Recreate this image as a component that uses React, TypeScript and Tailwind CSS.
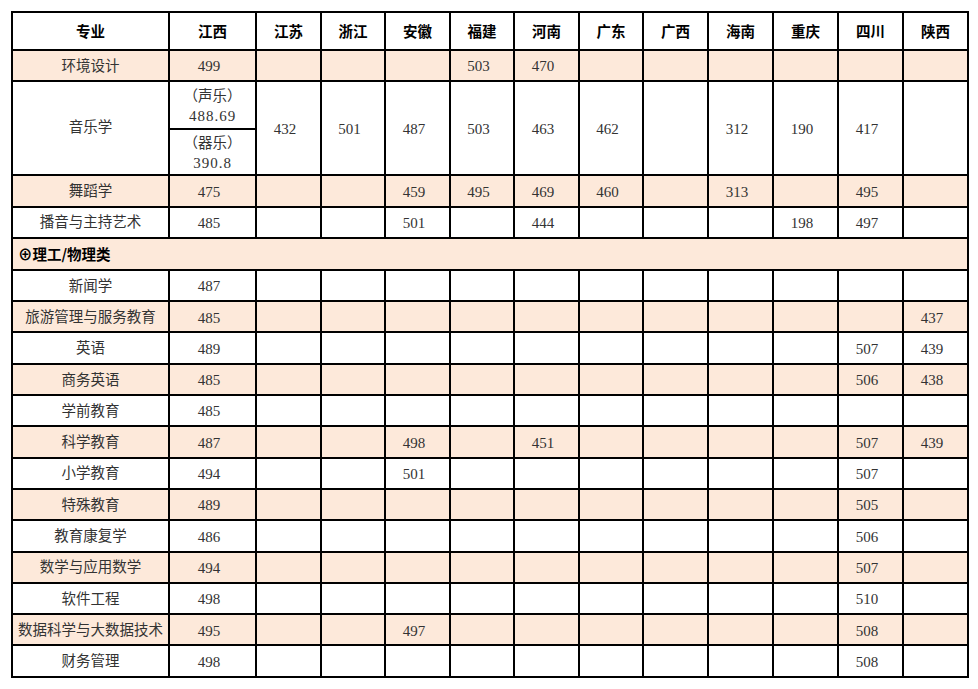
const PROVINCES = ["江西", "江苏", "浙江", "安徽", "福建", "河南", "广东", "广西", "海南", "重庆", "四川", "陕西"];

type Row = { name: string; scores: string[]; shaded: boolean };

const ART_ROWS: Row[] = [
  { name: "舞蹈学", scores: ["475", "", "", "459", "495", "469", "460", "", "313", "", "495", ""], shaded: true },
  { name: "播音与主持艺术", scores: ["485", "", "", "501", "", "444", "", "", "", "198", "497", ""], shaded: false },
];

const SCIENCE_ROWS: Row[] = [
  { name: "新闻学", scores: ["487", "", "", "", "", "", "", "", "", "", "", ""], shaded: false },
  { name: "旅游管理与服务教育", scores: ["485", "", "", "", "", "", "", "", "", "", "", "437"], shaded: true },
  { name: "英语", scores: ["489", "", "", "", "", "", "", "", "", "", "507", "439"], shaded: false },
  { name: "商务英语", scores: ["485", "", "", "", "", "", "", "", "", "", "506", "438"], shaded: true },
  { name: "学前教育", scores: ["485", "", "", "", "", "", "", "", "", "", "", ""], shaded: false },
  { name: "科学教育", scores: ["487", "", "", "498", "", "451", "", "", "", "", "507", "439"], shaded: true },
  { name: "小学教育", scores: ["494", "", "", "501", "", "", "", "", "", "", "507", ""], shaded: false },
  { name: "特殊教育", scores: ["489", "", "", "", "", "", "", "", "", "", "505", ""], shaded: true },
  { name: "教育康复学", scores: ["486", "", "", "", "", "", "", "", "", "", "506", ""], shaded: false },
  { name: "数学与应用数学", scores: ["494", "", "", "", "", "", "", "", "", "", "507", ""], shaded: true },
  { name: "软件工程", scores: ["498", "", "", "", "", "", "", "", "", "", "510", ""], shaded: false },
  { name: "数据科学与大数据技术", scores: ["495", "", "", "497", "", "", "", "", "", "", "508", ""], shaded: true },
  { name: "财务管理", scores: ["498", "", "", "", "", "", "", "", "", "", "508", ""], shaded: false },
];

const cell = "border-2 border-black text-center p-0";
const num = "text-[15px] pr-[7px] pt-[2px]";
const body = "font-['Liberation_Serif','Noto_Sans_CJK_SC',serif] text-[#333]";

function DataRow({ row }: { row: Row }) {
  return (
    <tr className={`h-[31.3px] ${row.shaded ? "bg-[#fde9da]" : "bg-white"}`}>
      <td className={`${cell} text-[14.5px] pt-[2px] whitespace-nowrap`}>{row.name}</td>
      {row.scores.map((s, i) => (
        <td key={i} className={`${cell} ${num}`}>
          {s}
        </td>
      ))}
    </tr>
  );
}

export default function App() {
  return (
    <div className="bg-white w-[978px] h-[689px] pt-[11px] pl-[11px]">
      <table className={`table-fixed border-collapse w-[956px] ${body}`}>
        <colgroup>
          <col className="w-[157px]" />
          <col className="w-[87px]" />
          <col className="w-[65px]" />
          <col className="w-[64px]" />
          <col className="w-[65px]" />
          <col className="w-[64px]" />
          <col className="w-[65px]" />
          <col className="w-[64px]" />
          <col className="w-[65px]" />
          <col className="w-[65px]" />
          <col className="w-[65px]" />
          <col className="w-[65px]" />
          <col className="w-[65px]" />
        </colgroup>
        <thead>
          {/* Header */}
          <tr className="h-[38px] bg-white">
            <th className={`${cell} font-['Noto_Sans_CJK_SC',sans-serif] font-bold text-[14.5px] text-black`}>专业</th>
            {PROVINCES.map((p) => (
              <th
                key={p}
                className={`${cell} font-['Noto_Sans_CJK_SC',sans-serif] font-bold text-[14.5px] text-black`}
              >
                {p}
              </th>
            ))}
          </tr>
        </thead>
        <tbody>
          <DataRow
            row={{
              name: "环境设计",
              scores: ["499", "", "", "", "503", "470", "", "", "", "", "", ""],
              shaded: true,
            }}
          />

          {/* 音乐学: 江西 split into two */}
          <tr className="h-[48px] bg-white">
            <td rowSpan={2} className={`${cell} text-[14.5px]`}>
              音乐学
            </td>
            <td className={`${cell} text-[14.5px] leading-[20px] pt-[2px]`}>
              <div>（声乐）</div>
              <div className="text-[15px] tracking-[1px]">488.69</div>
            </td>
            {["432", "501", "487", "503", "463", "462", "", "312", "190", "417", ""].map((s, i) => (
              <td key={i} rowSpan={2} className={`${cell} ${num}`}>
                {s}
              </td>
            ))}
          </tr>
          <tr className="h-[46px] bg-white">
            <td className={`${cell} text-[14.5px] leading-[20px] pt-[2px]`}>
              <div>（器乐）</div>
              <div className="text-[15px] tracking-[1px]">390.8</div>
            </td>
          </tr>

          {ART_ROWS.map((r) => (
            <DataRow key={r.name} row={r} />
          ))}

          {/* Section */}
          <tr className="h-[32px] bg-[#fde9da]">
            <td
              colSpan={13}
              className="border-2 border-black p-0 pl-[5px] text-left font-['Noto_Sans_CJK_SC',sans-serif] font-bold text-[14.5px] text-black"
            >
              ⊕理工/物理类
            </td>
          </tr>

          {SCIENCE_ROWS.map((r) => (
            <DataRow key={r.name} row={r} />
          ))}
        </tbody>
      </table>
    </div>
  );
}
